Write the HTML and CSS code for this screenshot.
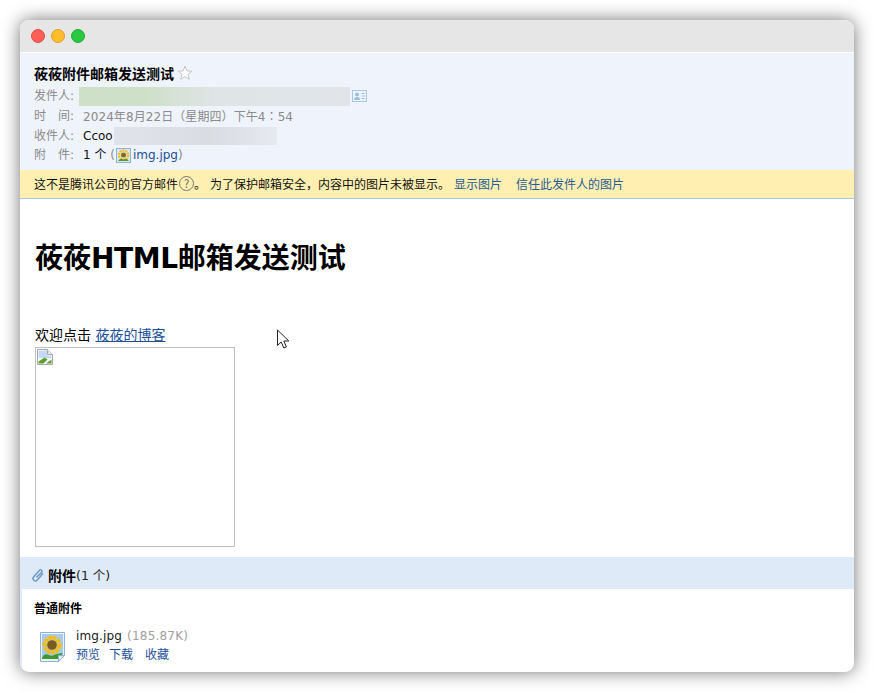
FILE: index.html
```html
<!DOCTYPE html>
<html lang="zh">
<head>
<meta charset="utf-8">
<title>莜莜附件邮箱发送测试</title>
<link rel="stylesheet" href="styles.css">
</head>
<body>
<div class="window">
  <div class="titlebar">
    <span class="dot dot-red"></span><span class="dot dot-yellow"></span><span class="dot dot-green"></span>
  </div>
  <div class="head">
    <div class="subject"><b>莜莜附件邮箱发送测试</b>
      <svg class="star" width="16" height="16" viewBox="0 0 16 16"><path d="M8 1.200l1.900 4.700 5 .3-3.900 3.200 1.300 4.900L8 11.600l-4.300 2.700L5 9.400 1.100 6.200l5-.3z" fill="#fff" stroke="#c4c4c4"/></svg>
    </div>
    <div class="row row-from"><span class="label">发件人:</span><span class="blur blur-from"></span>
      <svg class="card" width="15" height="12" viewBox="0 0 15 12"><rect x=".5" y=".5" width="14" height="11" fill="#eef4fb" stroke="#a9c6e2"/><circle cx="5" cy="4.400" r="2" fill="#9dbfdf"/><path d="M2 10c0-2.400 1.400-3 3-3s3 .6 3 3z" fill="#9dbfdf"/><path d="M9.500 3.500h3.500M9.500 6h3.500M9.500 8.500h3.500" stroke="#9dbfdf"/></svg>
    </div>
    <div class="row"><span class="label">时　间:</span><span class="muted spaced">2024年8月22日（星期四）下午4<span class="colon" lang="zh-TW">：</span>54</span></div>
    <div class="row row-to"><span class="label">收件人:</span><span class="name">Ccoo</span><span class="blur blur-to"></span></div>
    <div class="row row-att"><span class="label">附　件:</span><span class="name">1 个 </span><span class="muted">(</span>
      <svg class="thumb" width="15" height="15" viewBox="0 0 15 15"><rect x=".5" y=".5" width="14" height="14" fill="#dbe8f6" stroke="#8fb1d8"/><circle cx="7.500" cy="7" r="4.500" fill="none" stroke="#f3bd1c" stroke-width="2.500" stroke-dasharray="2 .8"/><circle cx="7.500" cy="7" r="2.500" fill="#8a6a20"/><path d="M2 13c1.500-2 3-2.500 5.500-1.500C9.500 10.500 11.500 10.500 13 13z" fill="#4f9a35"/></svg>
      <a class="link" href="#">img.jpg</a><span class="muted">)</span></div>
  </div>
  <div class="notice">
    <span>这不是腾讯公司的官方邮件</span><span class="qmark">?</span><span>。</span><span class="notice-text">为了保护邮箱安全，内容中的图片未被显示。</span>
    <a class="link notice-link" href="#">显示图片</a><a class="link notice-link" href="#">信任此发件人的图片</a>
  </div>
  <div class="content">
    <h1>莜莜<span class="latin">HTML</span>邮箱发送测试</h1>
    <p class="welcome">欢迎点击 <a class="link under" href="#">莜莜的博客</a></p>
    <div class="broken">
      <svg width="16" height="16" viewBox="0 0 16 16"><path d="M.5.5h10l5 5v10H.5z" fill="#fff" stroke="#a8a8a8"/><path d="M10.500.5v5h5" fill="#e8e8e8" stroke="#a8a8a8"/><path d="M1.500 1.500h8.500v5h4.500v3L1.500 9z" fill="#c5daf5"/><path d="M1.500 14.500v-2l6-4 3 2-4 4z" fill="#5aa02c"/><path d="M9 14.500l5.500-4v4z" fill="#5aa02c"/></svg>
    </div>
    <svg class="cursor" width="14" height="20" viewBox="0 0 14 20"><path d="M1.500 1v15.500l3.700-3.500 2.600 6 2.600-1.100-2.600-5.900h5z" fill="#fff" stroke="#222"/></svg>
  </div>
  <div class="attach-bar">
    <svg class="clip" width="14" height="14" viewBox="0 0 14 14"><path d="M12 5.500L6.300 12a2.400 2.400 0 0 1-3.600-3.200l5.600-6.400a1.500 1.500 0 0 1 2.300 2L5.300 9.500" fill="none" stroke="#6f9ac8" stroke-width="1.500"/></svg>
    <b class="bar-title">附件</b><span class="bar-count">(1 个)</span>
  </div>
  <div class="attach-body">
    <div class="attach-title">普通附件</div>
    <div class="file">
      <svg class="file-icon" width="25" height="30" viewBox="0 0 25 30"><path d="M.5.5h24v23l-6 6H.5z" fill="#eaf2fb" stroke="#8fb1d8"/><rect x="2" y="2" width="21" height="24" fill="#a5ccf0"/><circle cx="12" cy="13" r="7.200" fill="none" stroke="#f4bd17" stroke-width="4.500" stroke-dasharray="3.500 .8"/><circle cx="12" cy="13" r="4.800" fill="#7a5a1e"/><path d="M2 26c1-3 4-5 7-3 2 1 3 1 5 0s6-2 9-2l-5 6H2z" fill="#3e9a2d"/><path d="M18.500 29.500v-6h6z" fill="#dfe9f4" stroke="#8fb1d8"/></svg>
      <div class="file-info">
        <div class="file-line"><span class="file-name">img.jpg</span><span class="file-size">(185.87K)</span></div>
        <div class="file-actions"><a class="link" href="#">预览</a><a class="link" href="#">下载</a><a class="link" href="#">收藏</a></div>
      </div>
    </div>
  </div>
</div>
</body>
</html>
```
FILE: styles.css
```css
* { box-sizing: border-box; }
html, body { margin: 0; height: 100%; background: #fff; overflow: hidden; }
body {
  padding: 20px;
  font-family: "DejaVu Sans", "Noto Sans CJK SC", sans-serif;
  font-size: 12px;
  color: #000;
}
.window {
  width: 834px;
  height: 652px;
  background: #fff;
  border-radius: 9px;
  overflow: hidden;
  box-shadow: 0 0 18px rgba(0, 0, 0, .55);
  display: flex;
  flex-direction: column;
}
.titlebar {
  height: 33px;
  flex: none;
  background: #e6e6e6;
  border-bottom: 1px solid #fff;
  display: flex;
  align-items: center;
  gap: 6px;
  padding: 0 0 0 11px;
}
.dot { width: 14px; height: 14px; border-radius: 50%; margin-top: -1px; }
.dot-red { background: #fe5f57; border: 1px solid #e24b43; }
.dot-yellow { background: #febc2e; border: 1px solid #dfa023; }
.dot-green { background: #28c840; border: 1px solid #1fae31; }
.head {
  height: 117px;
  flex: none;
  background: #eff3fb;
  padding: 10px 0 0 14px;
}
.subject { height: 22px; display: flex; align-items: center; gap: 3px; font-size: 14px; line-height: 18px; }
.star { margin-top: -3px; }
.row { height: 19px; display: flex; align-items: center; line-height: 19px; white-space: pre; }
.row-from { height: 22px; }
.row-to .label, .row-to .name { padding-top: 1px; }
.row-att { padding-top: 2px; }
.label { color: #8b8b8b; width: 49px; flex: none; }
.muted { color: #8b8b8b; }
.spaced { letter-spacing: .08px; }
.colon { font-family: "Noto Sans CJK TC", sans-serif; }
.name { color: #111; }
.blur { display: block; }
.blur-from {
  width: 271px; height: 19px; margin-left: -4px;
  background: linear-gradient(90deg, #cfe0c9 0, #cfe0c9 25%, #dfe4e6 50%, #e1e5ea 100%);
}
.blur-to {
  width: 163px; height: 18px; margin-left: 1.500px;
  background: linear-gradient(90deg, #e0e4ea, #d9dde2 60%, #e6eaf0);
}
.card { margin-left: 2px; }
.thumb { margin: 0 2px 0 1px; }
.link { color: #1d4f97; text-decoration: none; }
.under { text-decoration: underline; }
.notice {
  height: 29px;
  flex: none;
  background: #fff0b2;
  border-bottom: 1px solid #a8c8e0;
  padding: 0 0 2px 14px;
  display: flex;
  align-items: center;
  font-family: "Noto Sans CJK SC", sans-serif;
  color: #111;
  white-space: pre;
}
.qmark {
  width: 15px; height: 15px; border: 1px solid #777; border-radius: 50%;
  color: #666; font-size: 11px; line-height: 13px; text-align: center; margin-left: 1px;
}
.notice-text { margin-left: 4px; }
.notice-link { margin-left: 4px; color: #2a5a94; }
.notice-link + .notice-link { margin-left: 14px; }
.content { position: relative; flex: 1; padding: 0 15px; }
h1 { margin: 42px 0 0; font-size: 28px; line-height: 36px; font-weight: 700; }
.latin { letter-spacing: -.4px; }
.welcome { margin: 47px 0 0; font-size: 14px; line-height: 23px; }
.broken { width: 200px; height: 200px; border: 1px solid #c0c0c0; padding: 1px; }
.broken svg { display: block; }
.cursor { position: absolute; left: 256px; top: 130px; }
.attach-bar {
  height: 32px;
  flex: none;
  background: #dfeaf8;
  padding: 3px 0 0 11px;
  display: flex;
  align-items: center;
}
.clip { margin-right: 3px; }
.bar-title { font-size: 14px; }
.bar-count { color: #222; font-size: 12.500px; }
.attach-body {
  height: 83px;
  flex: none;
  border-left: 2px solid #dfeaf8;
  padding: 12px 0 0 12px;
}
.attach-title { font-weight: 700; font-size: 12px; line-height: 16px; }
.file { display: flex; margin-top: 10px; padding-left: 6px; gap: 11px; }
.file-icon { margin-top: 5px; }
.file-info { line-height: 18px; }
.file-line { display: flex; gap: 5px; }
.file-name { color: #222; letter-spacing: .15px; }
.file-size { color: #a0a0a0; letter-spacing: .2px; }
.file-actions { display: flex; gap: 9px; margin-top: 1px; }
.file-actions .link + .link + .link { margin-left: 3px; }
```
